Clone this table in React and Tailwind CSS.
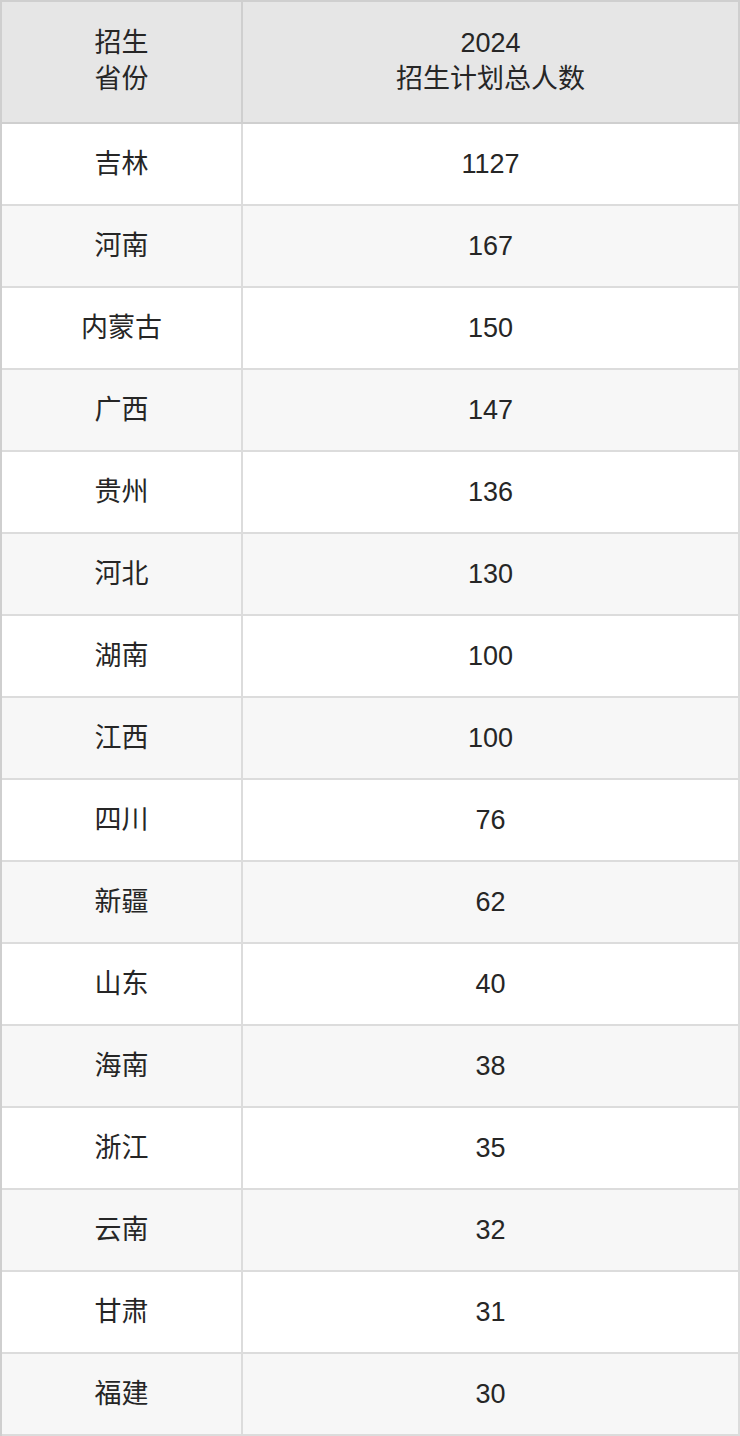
const rows = [
  ["吉林", "1127"],
  ["河南", "167"],
  ["内蒙古", "150"],
  ["广西", "147"],
  ["贵州", "136"],
  ["河北", "130"],
  ["湖南", "100"],
  ["江西", "100"],
  ["四川", "76"],
  ["新疆", "62"],
  ["山东", "40"],
  ["海南", "38"],
  ["浙江", "35"],
  ["云南", "32"],
  ["甘肃", "31"],
  ["福建", "30"],
];

export default function App() {
  return (
    <div
      className="w-[740px] bg-white text-[#262626] text-[27px]"
      style={{ fontFamily: '"Liberation Sans", "Noto Sans CJK SC", sans-serif' }}
    >
      <div className="border-l-2 border-t-2 border-[#cfcfcf]">
        <div className="flex h-[122px] bg-[#e6e6e6]">
          <div className="w-[241px] shrink-0 border-r-2 border-b-2 border-[#cfcfcf] flex items-center justify-center text-center leading-[36px]">
            <div className="-mt-[2px]">
              招生
              <br />
              省份
            </div>
          </div>
          <div className="flex-1 border-r-2 border-b-2 border-[#cfcfcf] flex items-center justify-center text-center leading-[36px]">
            <div className="-mt-[2px]">
              2024
              <br />
              招生计划总人数
            </div>
          </div>
        </div>
        {rows.map(([p, n], i) => (
          <div
            key={p + i}
            className={`flex h-[82px] ${i % 2 === 1 ? "bg-[#f7f7f7]" : "bg-white"}`}
          >
            <div className="w-[241px] shrink-0 border-r-2 border-b-2 border-[#dcdcdc] flex items-center justify-center">
              {p}
            </div>
            <div className="flex-1 border-r-2 border-b-2 border-[#dcdcdc] flex items-center justify-center">
              {n}
            </div>
          </div>
        ))}
      </div>
    </div>
  );
}
